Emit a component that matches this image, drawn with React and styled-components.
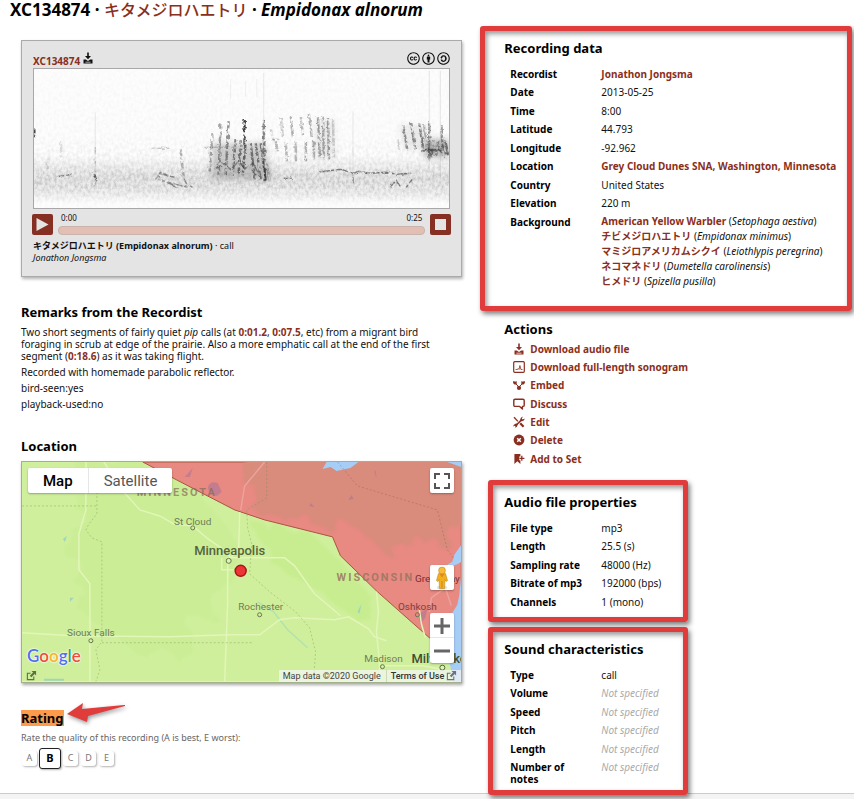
import React from "react";
import styled, { createGlobalStyle, css } from "styled-components";
import {
  FaCreativeCommons,
  FaCreativeCommonsBy,
  FaCreativeCommonsSa,
} from "react-icons/fa6";

const BRAND = "#8a2f20";
const FRAME = "#e03c3c";

const GlobalStyle = createGlobalStyle`
  *, *::before, *::after { box-sizing: border-box; }
  body {
    margin: 0;
    background: #fff;
    color: #111;
    font-family: "Noto Sans", "Noto Sans CJK JP", sans-serif;
    font-size: 10px;
    line-height: 12px;
  }
  h1, h2, p, ul { margin: 0; padding: 0; }
  button, input { font-family: inherit; }
`;

const Page = styled.div`
  display: flex;
  flex-direction: column;
  min-height: 100vh;
`;

const Title = styled.h1`
  padding: 0 10px;
  font-size: 17px;
  line-height: 20px;
  color: #000;
`;

const Link = styled.a`
  color: ${BRAND};
  font-weight: 700;
  text-decoration: none;
`;

const TitleLink = styled(Link)`
  font-size: 16px;
  font-weight: 500;
`;

const Columns = styled.main`
  display: grid;
  grid-template-columns: minmax(0, 19fr) minmax(0, 16fr);
  column-gap: 18px;
  align-items: start;
  padding: 6px 2px 0 21px;
  margin-bottom: -2px;
`;

const LeftColumn = styled.div`
  padding-top: 14px;
`;

const RightColumn = styled.div`
  display: flex;
  flex-direction: column;
  align-items: stretch;
`;

const Heading = styled.h2`
  font-size: 13px;
  line-height: 18px;
  color: #000;
`;

/* player */

const Player = styled.section`
  padding: 11px 11px 12px;
  border: 1px solid #aaa;
  background: #e4e4e4;
  box-shadow: 1px 2px 3px rgba(0, 0, 0, 0.3);
`;

const PlayerHeader = styled.div`
  display: flex;
  justify-content: space-between;
  height: 16px;
`;

const CatalogLink = styled(Link)`
  display: flex;
  gap: 2px;
  font-size: 10px;
  line-height: 18px;

  svg { color: #111; }
`;

const Licence = styled.a`
  display: flex;
  gap: 2px;
  color: #111;
  font-size: 13px;
`;

const Sonogram = styled.svg`
  display: block;
  width: 100%;
  height: auto;
  border: 1px solid #a8a8a8;
  background: #fdfdfd;
`;

const Controls = styled.div`
  display: flex;
  align-items: flex-start;
  justify-content: space-between;
  gap: 5px;
  margin: 5px -1px 0;
`;

const PlayerButton = styled.button`
  display: grid;
  place-items: center;
  flex: none;
  width: 21px;
  height: 21px;
  padding: 0;
  border: 0;
  border-radius: 2px;
  background: #853022;
`;

const Timeline = styled.div`
  flex: 1;
`;

const Times = styled.div`
  display: flex;
  justify-content: space-between;
  padding: 0 3px;
  font-size: 8px;
  line-height: 8px;
  margin-bottom: 4px;
`;

const Seek = styled.input`
  display: block;
  appearance: none;
  width: 100%;
  height: 9px;
  margin: 0;
  border: 1px solid #c9b5af;
  border-radius: 4px;
  background: #e3beb3;

  &::-webkit-slider-thumb {
    appearance: none;
    width: 1px;
    height: 1px;
  }
`;

const Caption = styled.p`
  margin-top: 5px;
  font-size: 9px;
  line-height: 12px;
`;

/* remarks */

const Remarks = styled.section`
  margin-top: 26px;

  ${Heading} { margin-bottom: 5px; }
  p {
    margin-bottom: 4px;
    padding-right: 16px;
  }
`;

/* map */

const LocationSection = styled.section`
  margin-top: 27px;
`;

const MapBox = styled.div`
  position: relative;
  margin-top: 6px;
  border: 1px solid #a3b08c;
  box-shadow: 1px 2px 3px rgba(0, 0, 0, 0.35);
  font-family: Roboto, sans-serif;
  overflow: hidden;
`;

const MapDrawing = styled.svg`
  display: block;
  width: 100%;
  height: auto;
  font-family: Roboto, sans-serif;
`;

const MapTypes = styled.div`
  position: absolute;
  top: 6px;
  left: 6px;
  display: flex;
  border-radius: 2px;
  background: #fff;
  box-shadow: 0 1px 2px rgba(0, 0, 0, 0.3);
`;

const MapType = styled.button`
  height: 25px;
  padding: 0 15px;
  border: 0;
  border-left: ${(p) => (p.$active ? "0" : "1px solid #e6e6e6")};
  background: none;
  font-family: inherit;
  font-size: 15px;
  font-weight: ${(p) => (p.$active ? 500 : 400)};
  color: ${(p) => (p.$active ? "#000" : "#565656")};
`;

const mapControl = css`
  position: absolute;
  right: 7px;
  width: 24px;
  border-radius: 2px;
  background: #fff;
  box-shadow: 0 1px 2px rgba(0, 0, 0, 0.3);
`;

const MapControl = styled.button`
  ${mapControl}
  top: ${(p) => p.$top};
  display: grid;
  place-items: center;
  height: 25px;
  padding: 0;
  border: 0;
`;

const ZoomControls = styled.div`
  ${mapControl}
  bottom: 19px;
  display: flex;
  flex-direction: column;
`;

const ZoomButton = styled.button`
  display: grid;
  place-items: center;
  height: 25px;
  padding: 0;
  border: 0;
  background: none;

  & + & { box-shadow: 0 -1px 0 #e6e6e6; }
`;

const MapLogo = styled.a`
  position: absolute;
  left: 5px;
  bottom: 15px;
  font-family: Lato, sans-serif;
  font-size: 17px;
  line-height: 22px;
  font-weight: 600;
  text-decoration: none;
  text-shadow: 0 0 2px #fff, 0 0 2px #fff, 0 0 1px #fff;
`;

const LogoLetter = styled.span`
  color: ${(p) => p.$color};
`;

const MapOut = styled.a`
  position: absolute;
  left: 4px;
  bottom: 1px;
  display: block;
  height: 11px;
  color: #5d7145;
`;

const MapLegal = styled.div`
  position: absolute;
  right: 0;
  bottom: 0;
  display: flex;
  gap: 5px;
  padding: 0 4px;
  background: rgba(245, 245, 245, 0.72);
  font-size: 9px;
  line-height: 12px;
  color: #444;

  a {
    display: flex;
    gap: 2px;
    padding-left: 4px;
    border-left: 1px solid #cdd8b8;
    color: #333;
    font-weight: 500;
    text-decoration: none;
  }

  svg { color: #6b7280; }
`;

/* rating */

const Rating = styled.section`
  margin-top: 26px;
`;

const RatingTitle = styled.div`
  display: flex;
  align-items: center;
  gap: 3px;
  height: 18px;

  ${Heading} {
    line-height: 16px;
    background: #fd9a4b;
  }
`;

const Arrow = styled.svg`
  flex: none;
  margin-top: -10px;
  filter: drop-shadow(1px 2px 2px rgba(0, 0, 0, 0.4));
`;

const RatingHint = styled.p`
  margin-top: 5px;
  font-size: 9px;
  color: #666;
`;

const Grades = styled.div`
  display: flex;
  align-items: center;
  gap: 3px;
  height: 22px;
  margin: 3px 0 24px 1px;
`;

const Grade = styled.button`
  width: 15px;
  height: 15px;
  padding: 0;
  border: 0;
  border-radius: 3px;
  background: #fff;
  box-shadow: 1px 1px 2px rgba(0, 0, 0, 0.3);
  font-size: 9px;
  line-height: 14px;
  color: #777;

  ${(p) =>
    p.$active &&
    css`
      width: 22px;
      height: 21px;
      margin: 0 -1px;
      border: 1px solid #222;
      font-size: 11px;
      font-weight: 700;
      color: #000;
    `}
`;

/* right column */

const Frame = styled.section`
  position: relative;
  z-index: 1;
  border: 5px solid ${FRAME};
  border-radius: 3px;
  box-shadow: 2px 3px 5px rgba(0, 0, 0, 0.5), inset 2px 3px 5px rgba(0, 0, 0, 0.4);
  padding: ${(p) => (p.$narrow ? "8px 0 0 11px" : "8px 0 0 19px")};
  margin-left: ${(p) => (p.$narrow ? "8px" : "0")};
  width: ${(p) => (p.$narrow ? "200px" : "auto")};

  & + & { margin-top: 5px; }
`;

const DataTable = styled.table`
  width: 100%;
  margin: 8px 0 ${(p) => p.$after};
  border-collapse: collapse;

  tr:nth-child(odd) > * { height: 18px; }
  tr:nth-child(even) > * { height: 19px; }

  th {
    width: 97px;
    padding: 3px 16px 3px 6px;
    text-align: left;
    vertical-align: top;
    color: #000;
  }

  td {
    padding: 3px 0;
    vertical-align: top;
    white-space: nowrap;
  }
`;

const Unset = styled.em`
  color: #aaa;
`;

const SpeciesList = styled.ul`
  margin-top: -2px;
  list-style: none;
  line-height: 15px;
`;

const Actions = styled.section`
  padding: 9px 0 12px 24px;
`;

const ActionList = styled.ul`
  margin-top: 2px;
  list-style: none;
`;

const Action = styled.li`
  height: 18px;

  &:nth-child(3n) { height: 19px; }

  a {
    display: grid;
    grid-template-columns: 12px 1fr;
    align-items: center;
    gap: 5px;
    height: 18px;
    padding-left: 9px;
  }
`;

const Footer = styled.footer`
  flex: 1;
  min-height: 6px;
  border-top: 1px solid #ccc;
  background: #f4f4f4;
`;

/* icons */

const Icon = ({ size = 12, children, ...rest }) => (
  <svg width={size} height={size} viewBox="0 0 12 12" fill="currentColor" aria-hidden="true" {...rest}>
    {children}
  </svg>
);

const DownloadIcon = ({ size }) => (
  <Icon size={size}>
    <path d="M5.200 .5h1.600v3.600H9L6 7.200l-3-3.100h2.200z" />
    <path d="M1.500 7.500h2.300L6 9l2.200-1.500h2.300V11.500h-9z M3.400 9.800v.6h5.200v-.6z" fillRule="evenodd" />
  </Icon>
);
const SonogramIcon = () => (
  <Icon fill="none" stroke="currentColor">
    <rect x="0.7" y="0.7" width="10.6" height="10.6" rx="1" strokeWidth="1.2" />
    <path d="M2.500 8.500h2l.7-1 .8 1 .9-4 1 4h1.600" strokeWidth="0.8" />
  </Icon>
);
const EmbedIcon = () => (
  <Icon>
    <path d="M2 4 6 8l4-4" fill="none" stroke="currentColor" strokeWidth="1" />
    <path d="M0 2.200h1.500l.6.8.6-.8h1V5l-1.800.8L.2 4.200z" />
    <path d="M12 2.200h-1.500l-.6.8-.6-.8h-1V5l1.800.8 1.700-1.600z" />
    <circle cx="6" cy="8.900" r="2.100" />
  </Icon>
);
const DiscussIcon = () => (
  <Icon>
    <path
      d="M2 1.200h8q1.200 0 1.200 1.200v4.800Q11.200 8.400 10 8.400h-.6v2.600L6.600 8.400H2Q.8 8.400.8 7.200V2.400Q.8 1.200 2 1.200z"
      fill="none"
      stroke="currentColor"
      strokeWidth="1.400"
      strokeLinejoin="round"
    />
  </Icon>
);
const EditIcon = () => (
  <Icon>
    <path d="M1 1.200 5 5.400" stroke="currentColor" strokeWidth="1.300" />
    <path d="m7.200 7.200 3.400 3.600" stroke="currentColor" strokeWidth="2.200" />
    <path d="M2.600 9.800 8.800 3.600" stroke="currentColor" strokeWidth="1.500" />
    <path d="M7.400 5.200Q6.600 1.400 10 .4L8.800 2.600l.8.800 2-.8Q11.400 5.600 7.400 5.200z" />
    <path d="M3.800 7.400Q.6 7.600.2 10.600l1.600-.8.800.8-.8 1.200Q4.600 11 4.800 8.200z" />
  </Icon>
);
const DeleteIcon = () => (
  <Icon>
    <circle cx="6" cy="6" r="5.400" />
    <path d="m4.200 4.200 3.600 3.600m0-3.600L4.200 7.800" stroke="#fff" strokeWidth="1.500" />
  </Icon>
);
const AddIcon = () => (
  <Icon>
    <path d="M1.400 1h6v2.600H6.200v3.600h1.200V11l-3-2.800-3 2.800z" />
    <path d="M8.800 2.800v5M6.400 5.300h5" stroke="currentColor" strokeWidth="1.300" />
  </Icon>
);
const OutIcon = () => (
  <Icon size={11}>
    <path d="M5 3.500H1.500v7h7V7" fill="none" stroke="currentColor" strokeWidth="1.200" />
    <path d="M6 1h5v5L9.400 4.400 5.800 8 4.200 6.400l3.500-3.600z" />
  </Icon>
);

/* sonogram strokes: x, top, bottom, lean, opacity */
const CALLS = [
  [178, 64, 102, -3, 0.35], [186, 54, 106, -2, 0.4], [194, 52, 106, -3, 0.45],
  [201, 70, 106, -3, 0.5], [206, 71, 104, -2, 0.5], [210, 51, 76, 0, 0.9],
  [211, 72, 106, -3, 0.6], [216, 74, 110, 4, 0.5], [221, 74, 110, 5, 0.5],
  [226, 74, 111, 5, 0.5], [229, 50, 112, 1, 0.55], [232, 95, 112, 3, 0.3],
  [236, 60, 72, 3, 0.2], [241, 72, 82, 2, 0.3], [246, 48, 68, 2, 0.22],
  [256, 47, 68, 2, 0.35], [266, 48, 66, 2, 0.3], [274, 45, 68, 3, 0.35],
  [283, 48, 89, 2, 0.4], [288, 47, 89, 1, 0.35], [293, 49, 90, 1, 0.4],
  [298, 50, 89, 1, 0.2], [251, 73, 92, 1, 0.3], [261, 72, 92, 0, 0.3],
  [271, 72, 92, 0, 0.35], [279, 72, 90, 0, 0.35], [362, 70, 80, 2, 0.2],
  [368, 56, 80, 4, 0.45], [376, 54, 80, 4, 0.45], [384, 54, 80, 4, 0.5],
  [389, 56, 82, 3, 0.3], [394, 52, 90, 0, 0.45], [398, 71, 88, -2, 0.4],
  [403, 71, 86, -2, 0.4], [406, 56, 88, 2, 0.45], [410, 72, 86, 3, 0.5],
  [146, 80, 108, 3, 0.3], [27, 72, 88, 0, 0.12], [14, 88, 100, 0, 0.15],
];

const SonogramPlot = () => (
  <Sonogram viewBox="0 0 414 139" role="img" aria-label="Sonogram of XC134874">
    <defs>
      <filter id="grain" x="0" y="0" width="100%" height="100%">
        <feTurbulence type="fractalNoise" baseFrequency="0.35 0.25" numOctaves="3" seed="8" />
        <feColorMatrix values="0 0 0 0 0.35  0 0 0 0 0.35  0 0 0 0 0.35  2 0 0 0 -0.700" />
      </filter>
      <filter id="rough" x="-5%" y="-5%" width="110%" height="110%">
        <feTurbulence type="fractalNoise" baseFrequency="0.3" numOctaves="2" seed="3" result="n" />
        <feDisplacementMap in="SourceGraphic" in2="n" scale="3" result="d" />
        <feColorMatrix in="n" values="0 0 0 0 0  0 0 0 0 0  0 0 0 0 0  4 0 0 0 -1.200" result="holes" />
        <feComposite in="d" in2="holes" operator="in" />
        <feGaussianBlur stdDeviation="0.7" />
      </filter>
      <filter id="smoke" x="-10%" y="-10%" width="120%" height="120%">
        <feGaussianBlur stdDeviation="3" />
      </filter>
      <linearGradient id="band" x1="0" y1="0" x2="0" y2="1">
        <stop offset="0" stopColor="#fff" stopOpacity="0.05" />
        <stop offset="0.48" stopColor="#fff" stopOpacity="0.08" />
        <stop offset="0.66" stopColor="#fff" stopOpacity="0.22" />
        <stop offset="0.75" stopColor="#fff" stopOpacity="0.5" />
        <stop offset="0.83" stopColor="#fff" stopOpacity="0.55" />
        <stop offset="0.9" stopColor="#fff" stopOpacity="0.3" />
        <stop offset="0.97" stopColor="#fff" stopOpacity="0.06" />
      </linearGradient>
      <linearGradient id="haze" x1="0" y1="0" x2="0" y2="1">
        <stop offset="0.62" stopColor="#888" stopOpacity="0" />
        <stop offset="0.78" stopColor="#888" stopOpacity="0.18" />
        <stop offset="0.88" stopColor="#888" stopOpacity="0.12" />
        <stop offset="0.96" stopColor="#888" stopOpacity="0" />
      </linearGradient>
      <mask id="bandMask">
        <rect width="414" height="139" fill="url(#band)" />
      </mask>
    </defs>
    <rect width="414" height="139" fill="url(#haze)" />
    <g mask="url(#bandMask)">
      <rect width="414" height="139" filter="url(#grain)" />
    </g>
    <g fill="#444" filter="url(#smoke)">
      <path d="M178 74h52l8 36h-62z" fillOpacity="0.250" />
      <path d="M389 70h24v18h-24z" fillOpacity="0.350" />
      <path d="M280 52h20v36h-20z" fillOpacity="0.100" />
      <path d="M364 56h28v24h-24z" fillOpacity="0.100" />
    </g>
    <g stroke="#1c1c1c" fill="none" filter="url(#rough)">
      {CALLS.map(([x, top, bottom, lean, opacity]) => (
        <path key={`${x}-${top}`} d={`M${x} ${top}L${x + lean} ${bottom}`} strokeWidth="2.500" strokeOpacity={opacity} />
      ))}
      <path d="M61 76v42" strokeOpacity="0.250" />
      <path d="M60 104l2 6" strokeWidth="2" strokeOpacity="0.600" />
      <path d="M121 110l5-7 14 5M124 104l16 4M132 112l10 6M146 104l6 10 6 4M124 110q20 6 30 8" strokeOpacity="0.450" strokeWidth="1.500" />
      <path d="M117 79h18M170 78h32M238 70h6" strokeOpacity="0.300" />
      <path d="M180 100l8-6 8 6 8-8 6 8 8-6 6 10" strokeOpacity="0.400" strokeWidth="1.500" />
      <path d="M284 103l14-2 8-1 12 4 6-2 12 2 14-1 12 2 14-1" strokeOpacity="0.500" strokeWidth="1.500" />
      <path d="M318 104v10M355 118l6-7 4 6M371 118l6-8M249 109h8M20 108l18-3" strokeOpacity="0.500" strokeWidth="1.500" />
      <path d="M386 82l16-2 10 5" strokeOpacity="0.500" strokeWidth="2" />
      <path d="M391 78l8 10M400 76l8 8M396 84l14-8" strokeOpacity="0.250" strokeWidth="3" />
      <path d="M0.500 60v8" strokeOpacity="0.800" strokeWidth="2" />
    </g>
    <g stroke="#555" strokeWidth="1">
      <path d="M61 43v70M229 4v50M318 42v70" strokeOpacity="0.120" />
      <path d="M394 2v100M405 2v108" strokeOpacity="0.140" />
      <path d="M196 10v20M211 12v16M222 10v18" strokeOpacity="0.080" />
    </g>
  </Sonogram>
);

const CITIES = [
  ["St Cloud", 171, 63, 10, 171, 66],
  ["Rochester", 239, 148, 10, 238, 153],
  ["Sioux Falls", 69, 174, 10, 69, 179],
  ["Madison", 362, 200, 10, 361, 205],
  ["Oshkosh", 396, 148, 10, 396, 153],
];

const RegionMap = () => (
  <MapDrawing viewBox="0 0 440 220" role="img" aria-label="Map of the recording location">
    <defs>
      <filter id="terrain" x="-10%" y="-10%" width="120%" height="120%">
        <feTurbulence type="fractalNoise" baseFrequency="0.04" numOctaves="3" seed="5" result="n" />
        <feDisplacementMap in="SourceGraphic" in2="n" scale="40" />
        <feGaussianBlur stdDeviation="1.500" />
      </filter>
      <clipPath id="range">
        <path d="M121 0l34 18 25 13 33 17 30 10 68 17 8 19 37 36 52 46 20 14 12-40V0z" />
      </clipPath>
    </defs>
    <rect width="440" height="220" fill="#cfef9c" />
    <g filter="url(#terrain)">
      <path d="M60 0h60l60 31 40 60-30 60-60 50-70-50-10-80z" fill="#cbed96" />
      <path d="M232 62l60 12 24 22 40 46-16 20-40-30-50-30z" fill="#c8ed90" />
    </g>
    <path
      d="M121 0l34 18 25 13 33 17 30 10 68 17 8 19 37 36 52 46 20 14 12-40V0z"
      fill="#e88982"
      stroke="#a9553f"
      strokeWidth="1"
    />
    <g clipPath="url(#range)">
      <path d="M220 -20h240v80l-40 20-30-6-20 20-40-30-50-4-46-10z" fill="#d98b7c" filter="url(#terrain)" />
    </g>
    {/* water */}
    <g fill="#a5cdf5">
      <path d="M301 7l4-7h32l-8 6-14 3-6-4z" />
      <path d="M440 83l-7 10-2 7-5 3 3 2 8-3 3-2z" />
      <path d="M440 112l-2 21-2 10-5 8-3 24-2 14 6 31h8z" />
      <path d="M426 0h14v5z" />
    </g>
    <g fill="#9a6fa0" fillOpacity="0.450">
      <path d="M186 26q2-8 10-5l4 9-5 4-6-2zM163 15l8-9-3 9zM288 44l5 1-4-4zM327 38l3-5 2 4zM397 152l9-5-2 9-5 6z" />
      <path d="M353 10l2 6-1-8z" />
    </g>
    <path d="M41 77l4-3-2 6zM48 136l4 0-4 4zM341 156l-4 4zM336 150l4-8-2 10zM22 217h20v2H22z" fill="#9fd6b8" />
    <path d="M236 140l16 10 14 18 20 18" fill="none" stroke="#b2e2ae" strokeWidth="1.500" />
    {/* roads */}
    <g fill="none" stroke="#e2f6b8" strokeWidth="1.500">
      <path d="M64 0v48l-7 24v36l11 14v98" />
      <path d="M0 171l50 3 98 1 60-2 30 0 20-15 15-2 40 2 14-3 20 12 6 8 12 4" />
      <path d="M82 0l20 30 16 18 20 6 14 8 19 2 14 12 20 14 4 6" />
      <path d="M205 96h58l10 8 20 28 26 22" />
      <path d="M206 100v40l-3 80M218 50l-1 36-8 10M200 96v12h12" />
      <path d="M355 130l2 20-2 20 3 30v20M361 204h40l22 4M404 176l-4-14-2-14" />
    </g>
    <g fill="none" stroke="#eba39c" strokeWidth="1.500">
      <path d="M219 48l4-24 20-24M408 150l2-14 14-10 6-12M424 126l6 18" />
    </g>
    <g fill="none" stroke="#6f8a52" strokeOpacity="0.350" strokeDasharray="2 2">
      <path d="M0 44h74M75 30v22l-8 10-3 6 6 8 10 4v100l-6 8 4 20-4 12M80 181h150M245 0v36l-20 12 1 18 4 16-2 30 20 18 26 20 14 16 6 24-2 30" />
      <path d="M316 0l20 24 40 12 40 12 10 40 6 8" stroke="#8d5347" />
    </g>
    {/* labels */}
    <g textAnchor="middle" fill="#6f7d55">
      <text x="155" y="34" fontSize="11" fontWeight="700" letterSpacing="2" fill="#846a5a" fillOpacity="0.700">MINNESOTA</text>
      <text x="354" y="119" fontSize="11" fontWeight="700" letterSpacing="2" fill="#98755f" fillOpacity="0.850">WISCONSIN</text>
      {CITIES.map(([name, x, y, size, cx, cy]) => (
        <g key={name}>
          <text x={x} y={y} fontSize={size} fill={name === "Oshkosh" ? "#7d4040" : undefined}>{name}</text>
          <circle cx={cx} cy={cy} r="2" fill="none" stroke="#66754d" strokeWidth="1" />
        </g>
      ))}
      <text x="208" y="93" fontSize="13" fontWeight="500" fill="#55643d">Minneapolis</text>
      <circle cx="207" cy="99" r="2.500" fill="#dcf3b4" stroke="#66754d" />
      <text x="416" y="120" fontSize="10" fill="#7a2f33">Green Bay</text>
      <text x="390" y="201" fontSize="13" fontWeight="500" fill="#3f4d33" textAnchor="start">Milwaukee</text>
      <circle cx="421" cy="206" r="2.500" fill="#dcf3b4" stroke="#55643d" />
    </g>
    <circle cx="219" cy="109" r="5.500" fill="#ee3535" stroke="#a3161b" strokeWidth="1.500" />
  </MapDrawing>
);

const Pegman = () => (
  <svg width="14" height="24" viewBox="0 0 14 24" aria-hidden="true">
    <ellipse cx="7" cy="21.500" rx="5" ry="2" fill="#ddd" />
    <path d="M3.500 7.500h7l2 7-1.500 1-1-2-.5 9H4.500l-.5-9-1 2-1.500-1z" fill="#f2b01e" stroke="#c58a1c" strokeWidth="0.600" />
    <path d="M4.500 8h5L7 11.500z" fill="#e08a1a" />
    <path d="M7 15v7" stroke="#c58a1c" />
    <circle cx="7" cy="4.500" r="3.400" fill="#f7bd3a" stroke="#c58a1c" strokeWidth="0.600" />
  </svg>
);

const LOGO = [
  ["G", "#4f6ef0"], ["o", "#ee4b3e"], ["o", "#f6b32c"],
  ["g", "#4f6ef0"], ["l", "#35a853"], ["e", "#ee4b3e"],
];

const SPECIES = [
  ["American Yellow Warbler", "Setophaga aestiva"],
  ["チビメジロハエトリ", "Empidonax minimus"],
  ["マミジロアメリカムシクイ", "Leiothlypis peregrina"],
  ["ネコマネドリ", "Dumetella carolinensis"],
  ["ヒメドリ", "Spizella pusilla"],
];

const RECORDING = [
  ["Recordist", <Link href="#recordist">Jonathon Jongsma</Link>],
  ["Date", "2013-05-25"],
  ["Time", "8:00"],
  ["Latitude", "44.793"],
  ["Longitude", "-92.962"],
  ["Location", <Link href="#location">Grey Cloud Dunes SNA, Washington, Minnesota</Link>],
  ["Country", "United States"],
  ["Elevation", "220 m"],
  [
    "Background",
    <SpeciesList>
      {SPECIES.map(([name, latin]) => (
        <li key={latin}>
          <Link href="#species">{name}</Link> (<em>{latin}</em>)
        </li>
      ))}
    </SpeciesList>,
  ],
];

const AUDIO = [
  ["File type", "mp3"],
  ["Length", "25.5 (s)"],
  ["Sampling rate", "48000 (Hz)"],
  ["Bitrate of mp3", "192000 (bps)"],
  ["Channels", "1 (mono)"],
];

const SOUND = [
  ["Type", "call"],
  ["Volume"],
  ["Speed"],
  ["Pitch"],
  ["Length"],
  ["Number of notes"],
];

const ACTIONS = [
  [DownloadIcon, "Download audio file"],
  [SonogramIcon, "Download full-length sonogram"],
  [EmbedIcon, "Embed"],
  [DiscussIcon, "Discuss"],
  [EditIcon, "Edit"],
  [DeleteIcon, "Delete"],
  [AddIcon, "Add to Set"],
];

const Properties = ({ rows, after }) => (
  <DataTable $after={after}>
    <tbody>
      {rows.map(([label, value]) => (
        <tr key={label}>
          <th scope="row">{label}</th>
          <td>{value ?? <Unset>Not specified</Unset>}</td>
        </tr>
      ))}
    </tbody>
  </DataTable>
);

export default function App() {
  return (
    <Page>
      <GlobalStyle />
      <Title>
        XC134874 · <TitleLink href="#species">キタメジロハエトリ</TitleLink> · <em>Empidonax alnorum</em>
      </Title>
      <Columns>
        <LeftColumn>
          <Player>
            <PlayerHeader>
              <CatalogLink href="#download">
                XC134874
                <DownloadIcon size={12} />
              </CatalogLink>
              <Licence href="#licence" aria-label="Creative Commons licence">
                <FaCreativeCommons />
                <FaCreativeCommonsBy />
                <FaCreativeCommonsSa />
              </Licence>
            </PlayerHeader>
            <SonogramPlot />
            <Controls>
              <PlayerButton aria-label="Play">
                <svg width="13" height="15" viewBox="0 0 13 15">
                  <path d="M0.500 1v13l12-6.500z" fill="#e4e4e4" />
                </svg>
              </PlayerButton>
              <Timeline>
                <Times>
                  <span>0:00</span>
                  <span>0:25</span>
                </Times>
                <Seek type="range" min="0" max="25" defaultValue="0" aria-label="Seek" />
              </Timeline>
              <PlayerButton aria-label="Stop">
                <svg width="11" height="11" viewBox="0 0 11 11">
                  <rect width="11" height="11" fill="#e4e4e4" />
                </svg>
              </PlayerButton>
            </Controls>
            <Caption>
              <b>キタメジロハエトリ (Empidonax alnorum)</b> · call
              <br />
              <em>Jonathon Jongsma</em>
            </Caption>
          </Player>

          <Remarks>
            <Heading>Remarks from the Recordist</Heading>
            <p>
              Two short segments of fairly quiet <em>pip</em> calls (at <Link href="#t1">0:01.2</Link>,{" "}
              <Link href="#t7">0:07.5</Link>, etc) from a migrant bird foraging in scrub at edge of the prairie. Also a
              more emphatic call at the end of the first segment (<Link href="#t18">0:18.6</Link>) as it was taking
              flight.
            </p>
            <p>Recorded with homemade parabolic reflector.</p>
            <p>bird-seen:yes</p>
            <p>playback-used:no</p>
          </Remarks>

          <LocationSection>
            <Heading>Location</Heading>
            <MapBox>
              <RegionMap />
              <MapTypes>
                <MapType $active>Map</MapType>
                <MapType>Satellite</MapType>
              </MapTypes>
              <MapControl $top="6px" aria-label="Full screen">
                <svg width="16" height="16" viewBox="0 0 16 16" fill="none" stroke="#555" strokeWidth="2">
                  <path d="M1 6V1h5M10 1h5v5M15 10v5h-5M6 15H1v-5" />
                </svg>
              </MapControl>
              <MapControl $top="103px" aria-label="Street view">
                <Pegman />
              </MapControl>
              <ZoomControls>
                <ZoomButton aria-label="Zoom in">
                  <svg width="16" height="16" viewBox="0 0 16 16" stroke="#666" strokeWidth="3">
                    <path d="M8 0v16M0 8h16" />
                  </svg>
                </ZoomButton>
                <ZoomButton aria-label="Zoom out">
                  <svg width="16" height="16" viewBox="0 0 16 16" stroke="#666" strokeWidth="3">
                    <path d="M0 8h16" />
                  </svg>
                </ZoomButton>
              </ZoomControls>
              <MapLogo href="#google">
                {LOGO.map(([letter, color], i) => (
                  <LogoLetter key={i} $color={color}>{letter}</LogoLetter>
                ))}
              </MapLogo>
              <MapOut href="#map" aria-label="Open map">
                <OutIcon />
              </MapOut>
              <MapLegal>
                <span>Map data ©2020 Google</span>
                <a href="#terms">
                  Terms of Use
                  <OutIcon />
                </a>
              </MapLegal>
            </MapBox>
          </LocationSection>

          <Rating>
            <RatingTitle>
              <Heading>Rating</Heading>
              <Arrow width="58" height="20" viewBox="0 0 58 20" aria-hidden="true">
                <path d="M0 11 16 0l-1 6 42-4q2 0 1 1L21 13l-1 6z" fill={FRAME} />
              </Arrow>
            </RatingTitle>
            <RatingHint>Rate the quality of this recording (A is best, E worst):</RatingHint>
            <Grades>
              {["A", "B", "C", "D", "E"].map((g) => (
                <Grade key={g} $active={g === "B"}>{g}</Grade>
              ))}
            </Grades>
          </Rating>
        </LeftColumn>

        <RightColumn>
          <Frame>
            <Heading>Recording data</Heading>
            <Properties rows={RECORDING} after="14px" />
          </Frame>

          <Actions>
            <Heading>Actions</Heading>
            <ActionList>
              {ACTIONS.map(([ActionIcon, label]) => (
                <Action key={label}>
                  <Link href="#action">
                    <ActionIcon />
                    {label}
                  </Link>
                </Action>
              ))}
            </ActionList>
          </Actions>

          <Frame $narrow>
            <Heading>Audio file properties</Heading>
            <Properties rows={AUDIO} after="6px" />
          </Frame>
          <Frame $narrow>
            <Heading>Sound characteristics</Heading>
            <Properties rows={SOUND} after="2px" />
          </Frame>
        </RightColumn>
      </Columns>
      <Footer />
    </Page>
  );
}
